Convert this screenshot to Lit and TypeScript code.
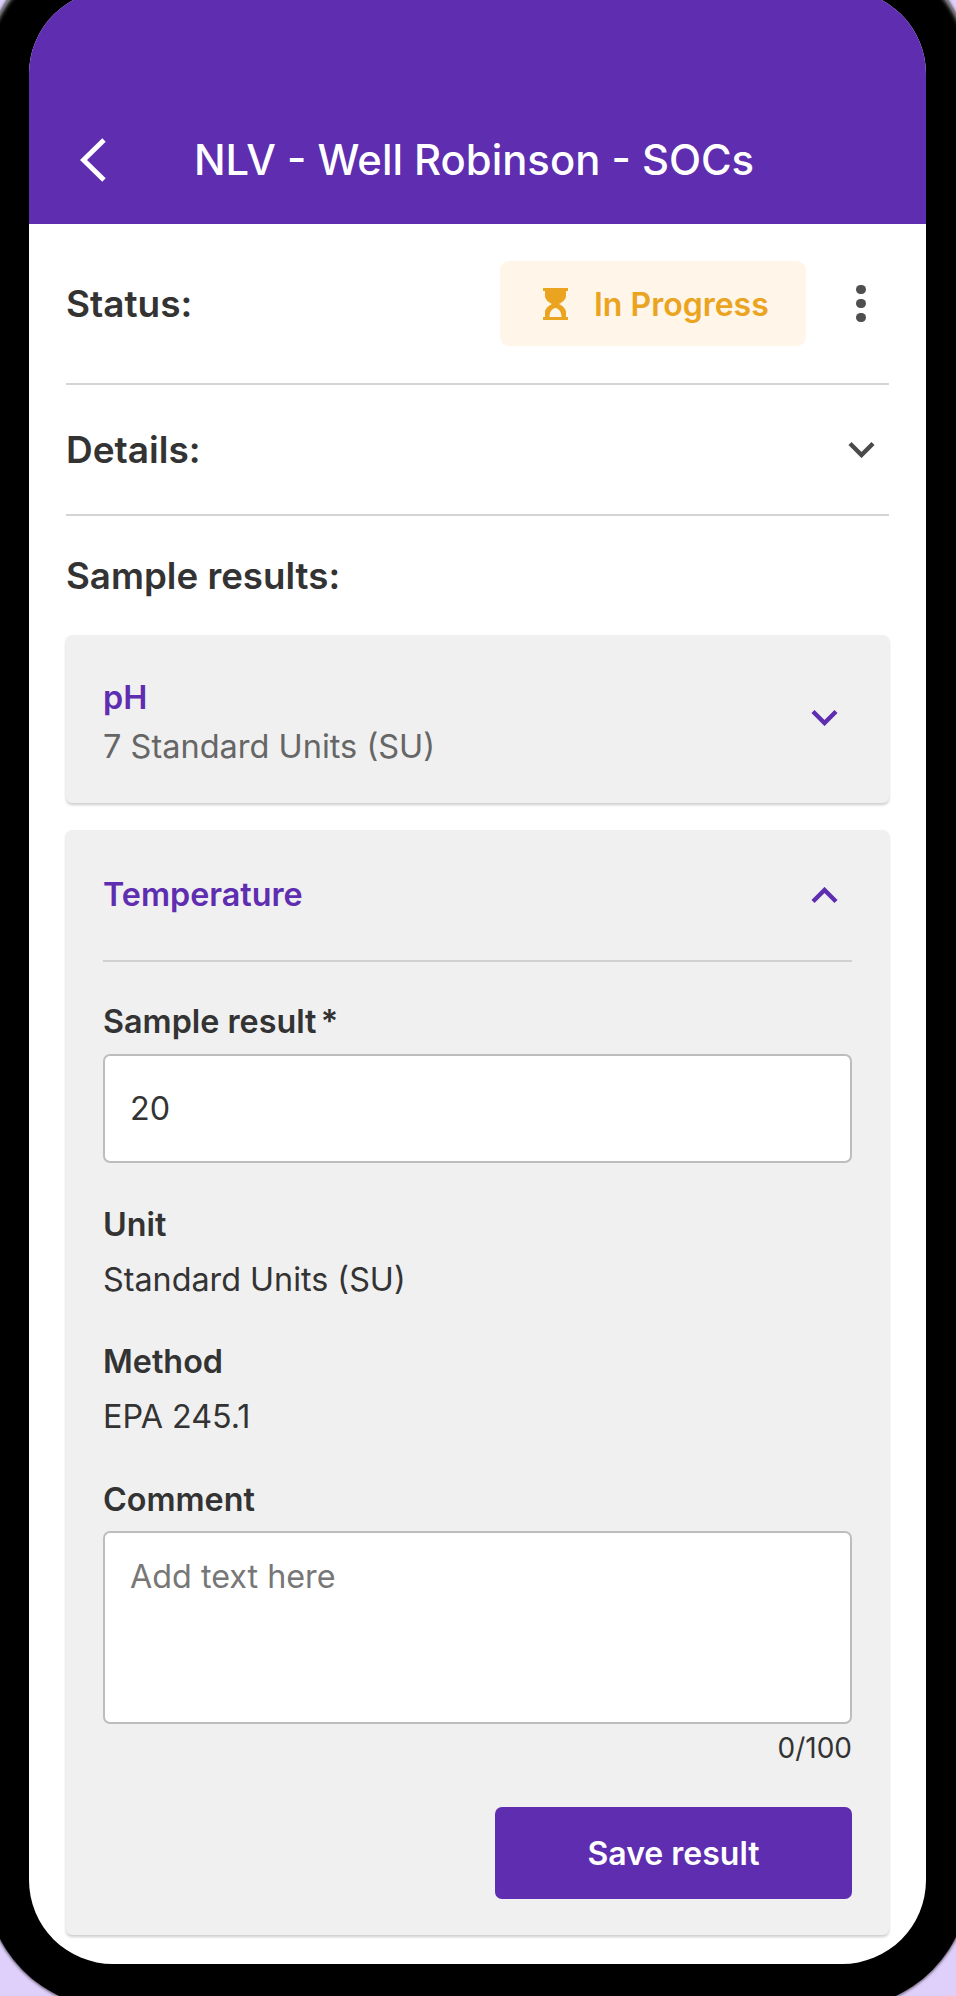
import { LitElement, html, css } from "lit";
import { customElement } from "lit/decorators.js";

const chevron = (dir: "down" | "up") => html`<svg viewBox="0 0 27 17" width="27" height="17" fill="none">
  <path d=${dir === "down" ? "M2 2.5 L13.5 14 L25 2.5" : "M2 14.5 L13.5 3 L25 14.5"} stroke="currentColor" stroke-width="4.4"></path>
</svg>`;

@customElement("app-root")
export class AppRoot extends LitElement {
  static styles = css`
    :host {
      display: block;
      width: 956px;
      height: 1996px;
      overflow: hidden;
      background: #dfd0fb;
      font-family: "Inter", "Noto Sans", sans-serif;
      color: #333;
    }
    .bezel {
      width: 985px;
      height: 2064px;
      margin: -56px 0 0 -15px;
      padding: 46px 0 0 44px;
      box-sizing: border-box;
      background: #000;
      border-radius: 128px / 130px;
      box-shadow: 0 0 3px 1px rgba(0, 0, 0, 0.6), inset 0 5px 4px -1px rgba(255, 255, 255, 0.7);
    }
    .screen {
      width: 897px;
      height: 1974px;
      background: #fff;
      border-radius: 84px;
      overflow: hidden;
    }
    .bar {
      height: 234px;
      box-sizing: border-box;
      background: #5e2db0;
      color: #fff;
      display: flex;
      align-items: center;
      padding: 148px 0 42px 51px;
      gap: 88px;
    }
    .bar svg { display: block; flex: none; }
    .title { font-size: 41.8px; font-weight: 500; line-height: 48px; white-space: nowrap; }
    .content { padding: 0 37px; }
    .row {
      display: flex;
      align-items: center;
      justify-content: space-between;
      border-bottom: 2px solid #d5d5d5;
      box-sizing: border-box;
    }
    .row.status { height: 161px; }
    .row.details { height: 131px; }
    .strong { font-size: 37px; font-weight: 600; line-height: 44px; }
    .status-right { display: flex; align-items: center; gap: 50px; padding-right: 23px; }
    .badge {
      width: 306px;
      height: 85px;
      box-sizing: border-box;
      background: #fff5e9;
      border-radius: 9px;
      color: #eba41f;
      display: flex;
      align-items: center;
      padding-left: 43px;
      gap: 26px;
      font-size: 32px;
      font-weight: 600;
    }
    .badge svg { display: block; }
    .badge span { padding-top: 2px; }
    .dots { width: 10px; display: flex; flex-direction: column; gap: 4.4px; }
    .dots i { display: block; width: 9.6px; height: 9.6px; border-radius: 50%; background: #4f4f4f; }
    .details svg { color: #4a4a4a; margin-right: 14px; }
    h2 { margin: 38px 0 37px; font-size: 36.7px; font-weight: 600; line-height: 44px; }
    .card {
      background: #f0f0f0;
      border-radius: 6px;
      box-shadow: 0 2px 3px rgba(0, 0, 0, 0.2);
      padding: 0 37px;
    }
    .card + .card { margin-top: 27px; }
    .head { display: flex; align-items: center; justify-content: space-between; color: #5e2db0; }
    .head svg { margin-right: 14px; display: block; }
    .ph { height: 168px; }
    .ph > div { padding-top: 6px; }
    .ph svg { margin-bottom: 4px; }
    .temp { height: 130px; border-bottom: 2px solid #d0d0d0; }
    .name { font-size: 32.3px; font-weight: 600; line-height: 40px; }
    .sub { font-size: 32.5px; line-height: 40px; color: #666; margin-top: 9px; }
    .form { padding: 40px 0 36px; }
    .lab { font-size: 32.3px; font-weight: 600; line-height: 40px; }
    .req { word-spacing: -4px; }
    .val { font-size: 32.3px; line-height: 40px; margin-top: 15px; }
    .lab.gap { margin-top: 42px; }
    .lab.gap.more { margin-top: 43px; }
    .field {
      background: #fff;
      border: 2px solid #bdbdbd;
      border-radius: 7px;
      box-sizing: border-box;
      padding: 0 25px;
      font-size: 32.3px;
    }
    .field.one { height: 109px; margin-top: 12px; display: flex; align-items: center; }
    .field.area { height: 193px; margin-top: 11px; padding-top: 24px; line-height: 40px; color: #777; }
    .count { text-align: right; font-size: 28px; line-height: 32px; margin-top: 8px; }
    .actions { display: flex; justify-content: flex-end; margin-top: 43px; }
    .save {
      width: 357px;
      height: 92px;
      background: #5e2db0;
      color: #fff;
      border: none;
      border-radius: 7px;
      font: 600 32px "Inter", sans-serif;
    }
  `;

  render() {
    return html`
      <div class="bezel">
        <div class="screen">
          <div class="bar">
            <svg viewBox="0 0 26 44" width="26" height="44" fill="none">
              <path d="M24 2 L3.5 22 L24 42" stroke="#fff" stroke-width="5"></path>
            </svg>
            <div class="title">NLV - Well Robinson - SOCs</div>
          </div>
          <div class="content">
            <div class="row status">
              <div class="strong">Status:</div>
              <div class="status-right">
                <div class="badge">
                  <svg viewBox="0 0 25 32" width="25" height="32" fill="currentColor">
                    <path fill-rule="evenodd" d="M0 0H25V3H23V8C23 11 20 14 16 16C20 18 23 21 23 24V29H25V32H0V29H2V24C2 21 5 18 9 16C5 14 2 11 2 8V3H0Z M6.5 29C6.5 24 9 20.5 12.5 20C16 20.5 18.5 24 18.5 29Z"></path>
                  </svg>
                  <span>In Progress</span>
                </div>
                <div class="dots"><i></i><i></i><i></i></div>
              </div>
            </div>
            <div class="row details">
              <div class="strong">Details:</div>
              ${chevron("down")}
            </div>
            <h2>Sample results:</h2>
            <div class="card">
              <div class="head ph">
                <div>
                  <div class="name">pH</div>
                  <div class="sub">7 Standard Units (SU)</div>
                </div>
                ${chevron("down")}
              </div>
            </div>
            <div class="card">
              <div class="head temp">
                <div class="name">Temperature</div>
                ${chevron("up")}
              </div>
              <div class="form">
                <div class="lab">Sample result<span class="req"> *</span></div>
                <div class="field one">20</div>
                <div class="lab gap">Unit</div>
                <div class="val">Standard Units (SU)</div>
                <div class="lab gap">Method</div>
                <div class="val">EPA 245.1</div>
                <div class="lab gap more">Comment</div>
                <div class="field area">Add text here</div>
                <div class="count">0/100</div>
                <div class="actions"><button class="save">Save result</button></div>
              </div>
            </div>
          </div>
        </div>
      </div>
    `;
  }
}
